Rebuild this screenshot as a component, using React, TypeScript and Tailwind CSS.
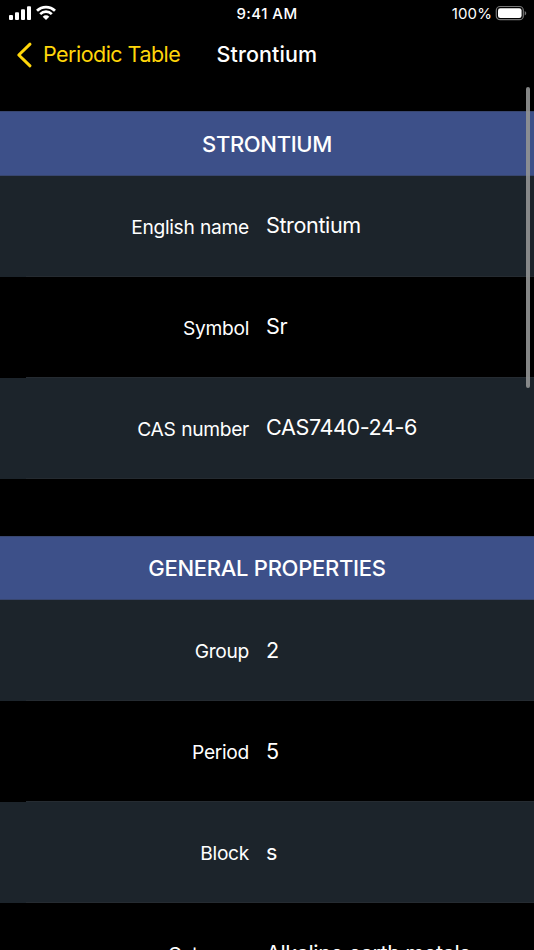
type Entry = { label: string; value: string; shade: string };

const identity: Entry[] = [
  { label: 'English name', value: 'Strontium', shade: 'bg-[#1c242b]' },
  { label: 'Symbol', value: 'Sr', shade: 'bg-black' },
  { label: 'CAS number', value: 'CAS7440-24-6', shade: 'bg-[#1c242b]' },
];

const general: Entry[] = [
  { label: 'Group', value: '2', shade: 'bg-[#1c242b]' },
  { label: 'Period', value: '5', shade: 'bg-black' },
  { label: 'Block', value: 's', shade: 'bg-[#1c242b]' },
  { label: 'Category', value: 'Alkaline earth metals', shade: 'bg-black' },
];

function StatusBar() {
  return (
    <div className="grid h-7 grid-cols-3 items-start text-[15px] leading-7">
      <svg className="h-7 w-16" viewBox="0 0 64 28" fill="white">
        <rect x="9" y="15" width="4" height="5" rx="1" />
        <rect x="15" y="12.3" width="4" height="7.7" rx="1" />
        <rect x="21" y="9.3" width="4" height="10.7" rx="1" />
        <rect x="27" y="6.3" width="4" height="13.7" rx="1" />
        <g fill="none" stroke="white" strokeWidth="2.7">
          <path d="M37 10.8a12.7 12.7 0 0 1 18 0" />
          <path d="M40.2 14.1a8.2 8.2 0 0 1 11.6 0" />
        </g>
        <path d="M42.7 16.7a4.7 4.7 0 0 1 6.6 0L46 20z" />
      </svg>
      <span className="text-center font-[550] tracking-[0.45px]">9:41 AM</span>
      <div className="flex justify-end pr-[7px]">
        <span className="mr-[3px] tracking-[0.1px]">100%</span>
        <svg className="h-7 w-8" viewBox="0 0 32 28">
          <rect x="1.3" y="6.5" width="27" height="13.2" rx="3.8" fill="none" stroke="#777777" strokeWidth="1.2" />
          <rect x="3" y="8.2" width="23.6" height="9.8" rx="2.3" fill="white" />
          <path d="M29.7 11v4.4c1-.5 1.5-1.3 1.5-2.2s-.5-1.7-1.5-2.2z" fill="#777777" />
        </svg>
      </div>
    </div>
  );
}

function NavBar() {
  return (
    <nav className="flex h-[54px] items-center">
      <svg className="ml-4 h-7 w-5 shrink-0" viewBox="0 0 20 28" fill="none" stroke="#ffd60a" strokeWidth="3" strokeLinecap="round" strokeLinejoin="round">
        <path d="M14 3.2 2.8 14 14 24.8" />
      </svg>
      <span className="ml-[7px] w-[173.5px] pb-px text-[21.5px] tracking-[-0.53px] whitespace-nowrap text-[#ffd60a]">Periodic Table</span>
      <h1 className="pb-px text-[21.5px] font-[550] tracking-[0.1px]">Strontium</h1>
    </nav>
  );
}

type SectionProps = { title: string; entries: Entry[]; headClass: string; labelClass: string };

function Section({ title, entries, headClass, labelClass }: SectionProps) {
  return (
    <section>
      <h2 className={`flex items-center justify-center border-y border-[#38466f] bg-[#3d5089] text-[22px] font-[550] ${headClass}`}>{title}</h2>
      <dl>
        {entries.map((e) => (
          <div key={e.label} className={`flex h-[101px] flex-col ${e.shade}`}>
            <div className="flex h-[100px] items-start gap-[17px] leading-8">
              <dt className="w-[249px] shrink-0 pt-[35px] text-right text-[19.2px] tracking-[-0.3px] [word-spacing:0.5px]">{e.label}</dt>
              <dd className={`text-[21.6px] tracking-[-0.4px] whitespace-nowrap ${labelClass}`}>{e.value}</dd>
            </div>
            <div className="ml-[26px] h-px bg-[#252b31]" />
          </div>
        ))}
      </dl>
    </section>
  );
}

export default function App() {
  return (
    <main className="relative h-[950px] w-[534px] overflow-hidden bg-black font-['Inter',sans-serif] text-white">
      <StatusBar />
      <NavBar />
      <div className="flex flex-col gap-[57px] pt-[29px]">
        <Section title="STRONTIUM" entries={identity} headClass="h-[65px] pt-[2px] tracking-[-0.35px]" labelClass="pt-[33px]" />
        <Section title="GENERAL PROPERTIES" entries={general} headClass="h-16 pt-px tracking-[-0.28px]" labelClass="pt-[34px]" />
      </div>
      <div className="absolute top-[87px] right-[4px] h-[301px] w-1 rounded-full bg-[#929394]/90" />
    </main>
  );
}
